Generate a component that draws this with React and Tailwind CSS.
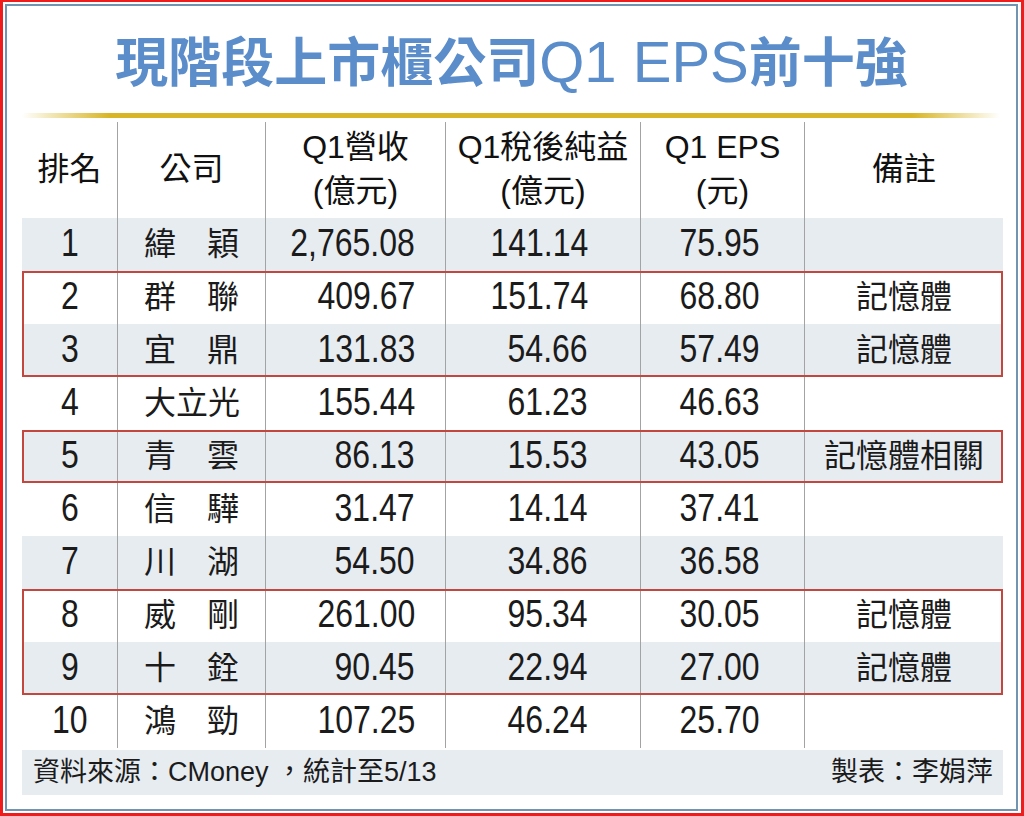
import React from 'react';

const rows = [
    { rank: '1', name: ['緯', '穎'], rev: '2,765.08', net: '141.14', eps: '75.95', note: '' },
    { rank: '2', name: ['群', '聯'], rev: '409.67', net: '151.74', eps: '68.80', note: '記憶體' },
    { rank: '3', name: ['宜', '鼎'], rev: '131.83', net: '54.66', eps: '57.49', note: '記憶體' },
    { rank: '4', name: ['大', '立', '光'], rev: '155.44', net: '61.23', eps: '46.63', note: '' },
    { rank: '5', name: ['青', '雲'], rev: '86.13', net: '15.53', eps: '43.05', note: '記憶體相關' },
    { rank: '6', name: ['信', '驊'], rev: '31.47', net: '14.14', eps: '37.41', note: '' },
    { rank: '7', name: ['川', '湖'], rev: '54.50', net: '34.86', eps: '36.58', note: '' },
    { rank: '8', name: ['威', '剛'], rev: '261.00', net: '95.34', eps: '30.05', note: '記憶體' },
    { rank: '9', name: ['十', '銓'], rev: '90.45', net: '22.94', eps: '27.00', note: '記憶體' },
    { rank: '10', name: ['鴻', '勁'], rev: '107.25', net: '46.24', eps: '25.70', note: '' },
];

// groups of row indexes, red box around the memory stocks
const groups = [
    { hl: false, idx: [0] },
    { hl: true, idx: [1, 2] },
    { hl: false, idx: [3] },
    { hl: true, idx: [4] },
    { hl: false, idx: [5, 6] },
    { hl: true, idx: [7, 8] },
    { hl: false, idx: [9] },
];

const cols = 'grid grid-cols-[95px_148px_180px_195px_164px_199px]';
const divider = 'border-l border-[#a3a3a3]';
// the chart uses a condensed face for figures, so squeeze Arial a bit
const num = "inline-block scale-x-[0.82] font-['Liberation_Sans',sans-serif] text-[39px] leading-none text-[#1b1b1b]";
const cjk = "font-['Noto_Sans_CJK_TC',sans-serif] text-[32px] leading-none text-[#1b1b1b]";

const Row = ({ r, i }) => (
    <div className={`${cols} h-[53px] ${i % 2 === 0 ? 'bg-[#e7ecf1]' : 'bg-white'}`}>
        <div className="flex items-center justify-center pb-[5px]">
            <span className={`${num} origin-center`}>{r.rank}</span>
        </div>
        <div className={`flex items-center justify-center pb-[7px] ${divider}`}>
            <div className={`flex w-[95px] justify-between ${cjk}`}>
                {r.name.map((c, k) => <span key={k}>{c}</span>)}
            </div>
        </div>
        <div className={`flex items-center justify-end pr-[30px] pb-[5px] ${divider}`}>
            <span className={`${num} origin-right`}>{r.rev}</span>
        </div>
        <div className={`flex items-center justify-end pr-[52px] pb-[5px] ${divider}`}>
            <span className={`${num} origin-right`}>{r.net}</span>
        </div>
        <div className={`flex items-center justify-end pr-[44px] pb-[5px] ${divider}`}>
            <span className={`${num} origin-right`}>{r.eps}</span>
        </div>
        <div className={`flex items-center justify-center pb-[7px] ${divider} ${cjk}`}>{r.note}</div>
    </div>
);

const App = () => {
    return (
        <div className="w-[1024px] h-[816px] bg-white border-[3px] border-t-2 border-[#f01c1c] p-[2px] pr-[3px]">
            <div className="h-full w-full border-2 border-[#7394b0] bg-white">
                {/* Title */}
                <h1 className="h-[107px] pt-[26px] text-center leading-[54px] text-[#5a8dca] whitespace-nowrap">
                    <span className="font-['Noto_Sans_CJK_TC',sans-serif] font-bold text-[53px]">現階段上市櫃公司</span>
                    <span className="font-['Liberation_Sans',sans-serif] text-[58px]">Q1 EPS</span>
                    <span className="font-['Noto_Sans_CJK_TC',sans-serif] font-bold text-[53px]">前十強</span>
                </h1>

                <div className="ml-[15px] h-[5px] w-[978px] bg-[linear-gradient(to_right,rgba(214,178,31,0)_0%,#d8b524_9%,#d8b524_91%,rgba(214,178,31,0)_100%)]" />

                <div className="ml-[15px] mt-[4px] w-[981px]">
                    {/* Header */}
                    <div className={`${cols} h-[96px] font-['Liberation_Sans','Noto_Sans_CJK_TC',sans-serif] text-[32px] leading-[44px] text-[#111] text-center`}>
                        <div className="flex items-center justify-center pb-[2px]">排名</div>
                        <div className={`flex items-center justify-center pb-[2px] ${divider}`}>公司</div>
                        <div className={`flex flex-col items-center justify-center pb-[2px] ${divider}`}>
                            <span>Q1營收</span>
                            <span>(億元)</span>
                        </div>
                        <div className={`flex flex-col items-center justify-center pb-[2px] ${divider}`}>
                            <span>Q1稅後純益</span>
                            <span>(億元)</span>
                        </div>
                        <div className={`flex flex-col items-center justify-center pb-[2px] ${divider}`}>
                            <span>Q1 EPS</span>
                            <span>(元)</span>
                        </div>
                        <div className={`flex items-center justify-center pb-[2px] ${divider}`}>備註</div>
                    </div>

                    {/* Body */}
                    {groups.map((g, gi) => (
                        <div key={gi} className={g.hl ? 'outline-2 -outline-offset-2 outline-[#c2473f]' : ''}>
                            {g.idx.map((i) => <Row key={i} r={rows[i]} i={i} />)}
                        </div>
                    ))}

                    {/* Footer */}
                    <div className="mt-[2px] flex h-[45px] items-center justify-between bg-[#e7ecf1] pl-[11px] pr-[10px] font-['Liberation_Sans','Noto_Sans_CJK_TC',sans-serif] text-[27px] leading-none text-[#1b1b1b]">
                        <span>資料來源：CMoney ，統計至5/13</span>
                        <span>製表：李娟萍</span>
                    </div>
                </div>
            </div>
        </div>
    );
};

export default App;
